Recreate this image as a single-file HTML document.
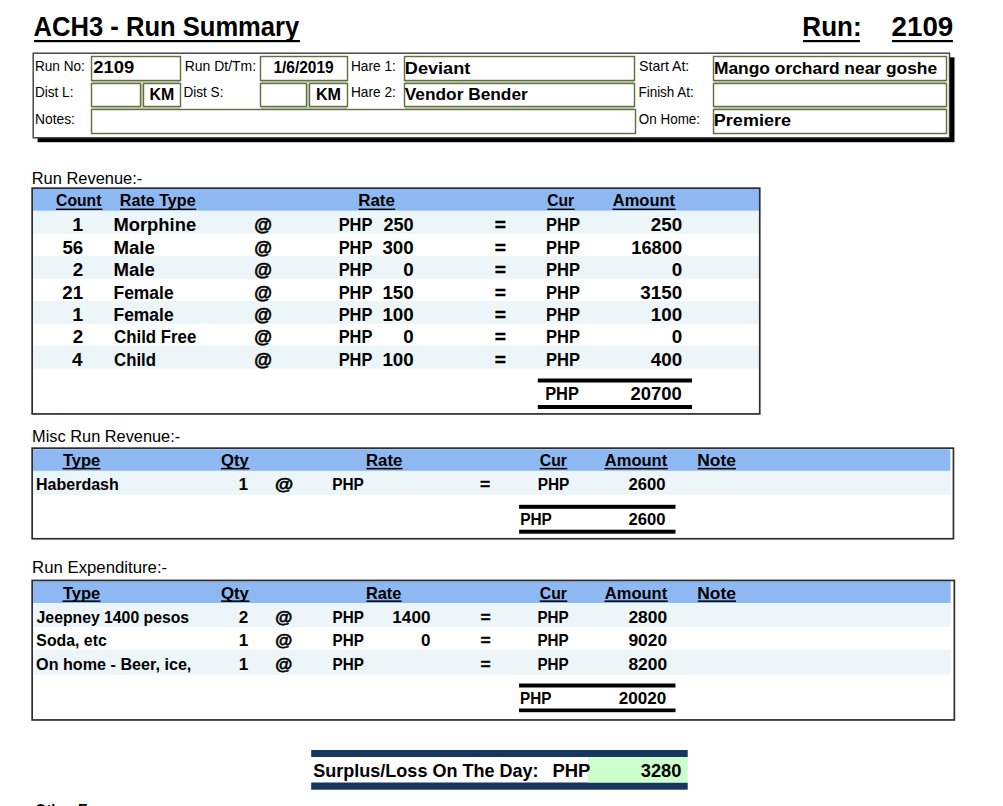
<!DOCTYPE html>
<html><head><meta charset="utf-8"><title>ACH3 - Run Summary</title>
<style>
html,body{margin:0;padding:0;background:#fff;width:1003px;height:806px;overflow:hidden}
svg{display:block;font-family:"Liberation Sans",sans-serif}
text{white-space:pre}
</style></head><body>
<svg width="1003" height="806" viewBox="0 0 1003 806">
<rect x="34.00" y="40.00" width="266.00" height="2.20" fill="#000"/>
<rect x="803.00" y="40.00" width="57.00" height="2.20" fill="#000"/>
<rect x="892.00" y="40.00" width="61.00" height="2.20" fill="#000"/>
<rect x="37.60" y="57.30" width="916.90" height="84.90" fill="#000"/>
<rect x="33.20" y="53.20" width="916.30" height="84.60" fill="#fff" stroke="#3c3c3c" stroke-width="1.40"/>
<rect x="92.00" y="81.00" width="88.00" height="2.00" fill="#c9d0bb"/>
<rect x="92.00" y="107.00" width="88.00" height="2.00" fill="#c9d0bb"/>
<rect x="261.00" y="81.00" width="86.00" height="2.00" fill="#c9d0bb"/>
<rect x="261.00" y="107.00" width="86.00" height="2.00" fill="#c9d0bb"/>
<rect x="405.00" y="81.00" width="229.00" height="2.00" fill="#c9d0bb"/>
<rect x="405.00" y="107.00" width="229.00" height="2.00" fill="#c9d0bb"/>
<rect x="714.00" y="81.00" width="232.00" height="2.00" fill="#c9d0bb"/>
<rect x="714.00" y="107.00" width="232.00" height="2.00" fill="#c9d0bb"/>
<rect x="141.00" y="84.00" width="2.00" height="22.00" fill="#c9d0bb"/>
<rect x="307.00" y="84.00" width="2.00" height="22.00" fill="#c9d0bb"/>
<rect x="91.5" y="56.5" width="89.0" height="24.0" fill="none" stroke="#617242" stroke-width="1.45"/>
<rect x="91.5" y="83.5" width="49.0" height="23.0" fill="none" stroke="#617242" stroke-width="1.45"/>
<rect x="143.5" y="83.5" width="37.0" height="23.0" fill="none" stroke="#617242" stroke-width="1.45"/>
<rect x="91.5" y="109.5" width="544.0" height="24.0" fill="none" stroke="#617242" stroke-width="1.45"/>
<rect x="260.5" y="56.5" width="87.0" height="24.0" fill="none" stroke="#617242" stroke-width="1.45"/>
<rect x="260.5" y="83.5" width="46.0" height="23.0" fill="none" stroke="#617242" stroke-width="1.45"/>
<rect x="309.5" y="83.5" width="38.0" height="23.0" fill="none" stroke="#617242" stroke-width="1.45"/>
<rect x="404.5" y="56.5" width="230.0" height="24.0" fill="none" stroke="#617242" stroke-width="1.45"/>
<rect x="404.5" y="83.5" width="230.0" height="23.0" fill="none" stroke="#617242" stroke-width="1.45"/>
<rect x="713.5" y="56.5" width="233.0" height="24.0" fill="none" stroke="#617242" stroke-width="1.45"/>
<rect x="713.5" y="83.5" width="233.0" height="23.0" fill="none" stroke="#617242" stroke-width="1.45"/>
<rect x="713.5" y="109.5" width="233.0" height="24.0" fill="none" stroke="#617242" stroke-width="1.45"/>
<rect x="33.00" y="189.00" width="726.00" height="21.80" fill="#8db8f2"/>
<rect x="33.00" y="210.80" width="726.00" height="22.70" fill="#ecf5f8"/>
<rect x="33.00" y="256.00" width="726.00" height="22.70" fill="#ecf5f8"/>
<rect x="33.00" y="301.00" width="726.00" height="22.60" fill="#ecf5f8"/>
<rect x="33.00" y="346.00" width="726.00" height="22.50" fill="#ecf5f8"/>
<rect x="32.15" y="188.15" width="727.60" height="225.80" fill="none" stroke="#2e2e2e" stroke-width="1.70"/>
<rect x="537.80" y="378.50" width="154.20" height="4.00" fill="#000"/>
<rect x="537.80" y="405.00" width="154.20" height="4.00" fill="#000"/>
<rect x="56.00" y="208.60" width="46.30" height="1.40" fill="#000"/>
<rect x="120.00" y="208.60" width="76.20" height="1.40" fill="#000"/>
<rect x="358.70" y="208.60" width="36.50" height="1.40" fill="#000"/>
<rect x="547.30" y="208.60" width="27.40" height="1.40" fill="#000"/>
<rect x="612.50" y="208.60" width="63.20" height="1.40" fill="#000"/>
<rect x="33.00" y="449.20" width="917.30" height="21.70" fill="#8db8f2"/>
<rect x="33.00" y="470.90" width="917.30" height="23.90" fill="#ecf5f8"/>
<rect x="32.15" y="448.15" width="921.30" height="90.60" fill="none" stroke="#2e2e2e" stroke-width="1.70"/>
<rect x="62.50" y="467.90" width="37.90" height="1.50" fill="#000"/>
<rect x="221.00" y="467.90" width="28.50" height="1.50" fill="#000"/>
<rect x="366.50" y="467.90" width="36.00" height="1.50" fill="#000"/>
<rect x="539.80" y="467.90" width="27.50" height="1.50" fill="#000"/>
<rect x="604.50" y="467.90" width="63.30" height="1.50" fill="#000"/>
<rect x="697.80" y="467.90" width="38.20" height="1.50" fill="#000"/>
<rect x="519.10" y="504.80" width="156.40" height="4.00" fill="#000"/>
<rect x="519.10" y="529.70" width="156.40" height="4.00" fill="#000"/>
<rect x="33.00" y="581.30" width="917.60" height="21.80" fill="#8db8f2"/>
<rect x="33.00" y="603.10" width="917.60" height="24.00" fill="#ecf5f8"/>
<rect x="33.00" y="649.90" width="917.60" height="24.80" fill="#ecf5f8"/>
<rect x="32.15" y="580.45" width="922.20" height="139.50" fill="none" stroke="#2e2e2e" stroke-width="1.70"/>
<rect x="62.50" y="600.40" width="37.90" height="1.50" fill="#000"/>
<rect x="221.00" y="600.40" width="28.50" height="1.50" fill="#000"/>
<rect x="366.50" y="600.40" width="35.10" height="1.50" fill="#000"/>
<rect x="539.80" y="600.40" width="27.50" height="1.50" fill="#000"/>
<rect x="604.50" y="600.40" width="63.30" height="1.50" fill="#000"/>
<rect x="697.80" y="600.40" width="38.20" height="1.50" fill="#000"/>
<rect x="519.00" y="683.50" width="156.50" height="4.00" fill="#000"/>
<rect x="519.00" y="708.50" width="156.50" height="3.70" fill="#000"/>
<rect x="311.20" y="750.00" width="376.50" height="7.00" fill="#17375e"/>
<rect x="311.20" y="782.50" width="376.50" height="7.20" fill="#17375e"/>
<rect x="588.00" y="757.00" width="99.70" height="25.50" fill="#ccffcc"/>
<text transform="translate(33.60 36.00) scale(0.9359 1)" font-size="27.33" font-weight="bold" fill="#000">ACH3 - Run Summary</text>
<text transform="translate(802.37 36.00) scale(0.9529 1)" font-size="27.33" font-weight="bold" fill="#000">Run:</text>
<text transform="translate(891.53 36.00) scale(1.0160 1)" font-size="27.33" font-weight="bold" fill="#000">2109</text>
<text transform="translate(34.94 71.00) scale(0.9849 1)" font-size="13.81" fill="#000">Run No:</text>
<text transform="translate(34.94 97.20) scale(0.9835 1)" font-size="13.81" fill="#000">Dist L:</text>
<text transform="translate(34.92 123.50) scale(1.0032 1)" font-size="13.81" fill="#000">Notes:</text>
<text transform="translate(184.71 71.00) scale(1.0123 1)" font-size="13.81" fill="#000">Run Dt/Tm:</text>
<text transform="translate(183.44 97.20) scale(0.9834 1)" font-size="13.81" fill="#000">Dist S:</text>
<text transform="translate(350.93 71.00) scale(0.9917 1)" font-size="13.81" fill="#000">Hare 1:</text>
<text transform="translate(350.93 97.20) scale(0.9917 1)" font-size="13.81" fill="#000">Hare 2:</text>
<text transform="translate(639.06 71.00) scale(1.0228 1)" font-size="13.81" fill="#000">Start At:</text>
<text transform="translate(638.45 97.20) scale(0.9742 1)" font-size="13.81" fill="#000">Finish At:</text>
<text transform="translate(638.87 123.50) scale(0.9716 1)" font-size="13.81" fill="#000">On Home:</text>
<text transform="translate(93.22 73.40) scale(1.1508 1)" font-size="15.99" font-weight="bold" fill="#000">2109</text>
<text transform="translate(149.61 99.80) scale(0.9940 1)" font-size="15.99" font-weight="bold" fill="#000">KM</text>
<text transform="translate(273.43 73.40) scale(0.9681 1)" font-size="15.99" font-weight="bold" fill="#000">1/6/2019</text>
<text transform="translate(315.99 99.80) scale(1.0070 1)" font-size="15.99" font-weight="bold" fill="#000">KM</text>
<text transform="translate(404.87 73.50) scale(1.1327 1)" font-size="15.99" font-weight="bold" fill="#000">Deviant</text>
<text transform="translate(404.80 99.60) scale(1.0820 1)" font-size="15.99" font-weight="bold" fill="#000">Vendor Bender</text>
<text transform="translate(713.91 73.50) scale(1.0882 1)" font-size="15.99" font-weight="bold" fill="#000">Mango orchard near goshe</text>
<text transform="translate(713.87 126.30) scale(1.1261 1)" font-size="15.99" font-weight="bold" fill="#000">Premiere</text>
<text transform="translate(31.72 183.50) scale(1.0473 1)" font-size="15.70" fill="#000">Run Revenue:-</text>
<text transform="translate(32.12 442.00) scale(1.0426 1)" font-size="15.70" fill="#000">Misc Run Revenue:-</text>
<text transform="translate(32.09 573.30) scale(1.0679 1)" font-size="15.70" fill="#000">Run Expenditure:-</text>
<text transform="translate(56.11 205.90) scale(0.9804 1)" font-size="15.99" font-weight="bold" fill="#000">Count</text>
<text transform="translate(119.79 205.90) scale(1.0091 1)" font-size="15.99" font-weight="bold" fill="#000">Rate Type</text>
<text transform="translate(358.14 205.90) scale(1.0614 1)" font-size="15.99" font-weight="bold" fill="#000">Rate</text>
<text transform="translate(547.31 205.90) scale(0.9773 1)" font-size="15.99" font-weight="bold" fill="#000">Cur</text>
<text transform="translate(612.74 205.90) scale(1.0323 1)" font-size="15.99" font-weight="bold" fill="#000">Amount</text>
<text transform="translate(63.00 466.20) scale(1.0299 1)" font-size="15.99" font-weight="bold" fill="#000">Type</text>
<text transform="translate(220.98 466.20) scale(1.0436 1)" font-size="15.99" font-weight="bold" fill="#000">Qty</text>
<text transform="translate(365.95 466.20) scale(1.0494 1)" font-size="15.99" font-weight="bold" fill="#000">Rate</text>
<text transform="translate(539.81 466.20) scale(0.9848 1)" font-size="15.99" font-weight="bold" fill="#000">Cur</text>
<text transform="translate(604.74 466.20) scale(1.0357 1)" font-size="15.99" font-weight="bold" fill="#000">Amount</text>
<text transform="translate(697.21 466.20) scale(1.0870 1)" font-size="15.99" font-weight="bold" fill="#000">Note</text>
<text transform="translate(62.90 598.90) scale(1.0327 1)" font-size="15.99" font-weight="bold" fill="#000">Type</text>
<text transform="translate(220.98 598.90) scale(1.0474 1)" font-size="15.99" font-weight="bold" fill="#000">Qty</text>
<text transform="translate(365.98 598.90) scale(1.0223 1)" font-size="15.99" font-weight="bold" fill="#000">Rate</text>
<text transform="translate(539.81 598.90) scale(0.9848 1)" font-size="15.99" font-weight="bold" fill="#000">Cur</text>
<text transform="translate(604.74 598.90) scale(1.0357 1)" font-size="15.99" font-weight="bold" fill="#000">Amount</text>
<text transform="translate(697.21 598.90) scale(1.0870 1)" font-size="15.99" font-weight="bold" fill="#000">Note</text>
<text transform="translate(72.27 231.00) scale(1.1068 1)" font-size="17.73" font-weight="bold" fill="#000">1</text>
<text transform="translate(113.45 231.00) scale(1.0366 1)" font-size="17.73" font-weight="bold" fill="#000">Morphine</text>
<text transform="translate(254.15 231.00) scale(1.0247 1)" font-size="17.73" font-weight="bold" fill="#000" stroke="#000" stroke-width="0.55">@</text>
<text transform="translate(338.67 231.00) scale(0.9259 1)" font-size="17.73" font-weight="bold" fill="#000">PHP</text>
<text transform="translate(383.43 231.00) scale(1.0243 1)" font-size="17.73" font-weight="bold" fill="#000">250</text>
<text transform="translate(494.80 231.00) scale(1.0828 1)" font-size="17.73" font-weight="bold" fill="#000" stroke="#000" stroke-width="0.35">=</text>
<text transform="translate(545.97 231.00) scale(0.9316 1)" font-size="17.73" font-weight="bold" fill="#000">PHP</text>
<text transform="translate(650.79 231.00) scale(1.0605 1)" font-size="17.73" font-weight="bold" fill="#000">250</text>
<text transform="translate(62.41 254.00) scale(1.0523 1)" font-size="17.73" font-weight="bold" fill="#000">56</text>
<text transform="translate(113.44 254.00) scale(1.0509 1)" font-size="17.73" font-weight="bold" fill="#000">Male</text>
<text transform="translate(254.15 254.00) scale(1.0247 1)" font-size="17.73" font-weight="bold" fill="#000" stroke="#000" stroke-width="0.55">@</text>
<text transform="translate(338.67 254.00) scale(0.9259 1)" font-size="17.73" font-weight="bold" fill="#000">PHP</text>
<text transform="translate(382.39 254.00) scale(1.0605 1)" font-size="17.73" font-weight="bold" fill="#000">300</text>
<text transform="translate(494.80 254.00) scale(1.0828 1)" font-size="17.73" font-weight="bold" fill="#000" stroke="#000" stroke-width="0.35">=</text>
<text transform="translate(545.97 254.00) scale(0.9316 1)" font-size="17.73" font-weight="bold" fill="#000">PHP</text>
<text transform="translate(631.26 254.00) scale(1.0319 1)" font-size="17.73" font-weight="bold" fill="#000">16800</text>
<text transform="translate(72.71 276.00) scale(1.0605 1)" font-size="17.73" font-weight="bold" fill="#000">2</text>
<text transform="translate(113.44 276.00) scale(1.0509 1)" font-size="17.73" font-weight="bold" fill="#000">Male</text>
<text transform="translate(254.15 276.00) scale(1.0247 1)" font-size="17.73" font-weight="bold" fill="#000" stroke="#000" stroke-width="0.55">@</text>
<text transform="translate(338.67 276.00) scale(0.9259 1)" font-size="17.73" font-weight="bold" fill="#000">PHP</text>
<text transform="translate(403.30 276.00) scale(1.0605 1)" font-size="17.73" font-weight="bold" fill="#000">0</text>
<text transform="translate(494.80 276.00) scale(1.0828 1)" font-size="17.73" font-weight="bold" fill="#000" stroke="#000" stroke-width="0.35">=</text>
<text transform="translate(545.97 276.00) scale(0.9316 1)" font-size="17.73" font-weight="bold" fill="#000">PHP</text>
<text transform="translate(671.70 276.00) scale(1.0605 1)" font-size="17.73" font-weight="bold" fill="#000">0</text>
<text transform="translate(62.25 298.60) scale(1.0605 1)" font-size="17.73" font-weight="bold" fill="#000">21</text>
<text transform="translate(113.51 298.60) scale(0.9839 1)" font-size="17.73" font-weight="bold" fill="#000">Female</text>
<text transform="translate(254.15 298.60) scale(1.0247 1)" font-size="17.73" font-weight="bold" fill="#000" stroke="#000" stroke-width="0.55">@</text>
<text transform="translate(338.67 298.60) scale(0.9259 1)" font-size="17.73" font-weight="bold" fill="#000">PHP</text>
<text transform="translate(382.39 298.60) scale(1.0605 1)" font-size="17.73" font-weight="bold" fill="#000">150</text>
<text transform="translate(494.80 298.60) scale(1.0828 1)" font-size="17.73" font-weight="bold" fill="#000" stroke="#000" stroke-width="0.35">=</text>
<text transform="translate(545.97 298.60) scale(0.9316 1)" font-size="17.73" font-weight="bold" fill="#000">PHP</text>
<text transform="translate(640.33 298.60) scale(1.0605 1)" font-size="17.73" font-weight="bold" fill="#000">3150</text>
<text transform="translate(72.27 321.00) scale(1.1068 1)" font-size="17.73" font-weight="bold" fill="#000">1</text>
<text transform="translate(113.51 321.00) scale(0.9839 1)" font-size="17.73" font-weight="bold" fill="#000">Female</text>
<text transform="translate(254.15 321.00) scale(1.0247 1)" font-size="17.73" font-weight="bold" fill="#000" stroke="#000" stroke-width="0.55">@</text>
<text transform="translate(338.67 321.00) scale(0.9259 1)" font-size="17.73" font-weight="bold" fill="#000">PHP</text>
<text transform="translate(382.39 321.00) scale(1.0605 1)" font-size="17.73" font-weight="bold" fill="#000">100</text>
<text transform="translate(494.80 321.00) scale(1.0828 1)" font-size="17.73" font-weight="bold" fill="#000" stroke="#000" stroke-width="0.35">=</text>
<text transform="translate(545.97 321.00) scale(0.9316 1)" font-size="17.73" font-weight="bold" fill="#000">PHP</text>
<text transform="translate(650.79 321.00) scale(1.0605 1)" font-size="17.73" font-weight="bold" fill="#000">100</text>
<text transform="translate(72.71 343.30) scale(1.0605 1)" font-size="17.73" font-weight="bold" fill="#000">2</text>
<text transform="translate(114.07 343.30) scale(0.9485 1)" font-size="17.73" font-weight="bold" fill="#000">Child Free</text>
<text transform="translate(254.15 343.30) scale(1.0247 1)" font-size="17.73" font-weight="bold" fill="#000" stroke="#000" stroke-width="0.55">@</text>
<text transform="translate(338.67 343.30) scale(0.9259 1)" font-size="17.73" font-weight="bold" fill="#000">PHP</text>
<text transform="translate(403.30 343.30) scale(1.0605 1)" font-size="17.73" font-weight="bold" fill="#000">0</text>
<text transform="translate(494.80 343.30) scale(1.0828 1)" font-size="17.73" font-weight="bold" fill="#000" stroke="#000" stroke-width="0.35">=</text>
<text transform="translate(545.97 343.30) scale(0.9316 1)" font-size="17.73" font-weight="bold" fill="#000">PHP</text>
<text transform="translate(671.70 343.30) scale(1.0605 1)" font-size="17.73" font-weight="bold" fill="#000">0</text>
<text transform="translate(72.12 365.60) scale(1.0605 1)" font-size="17.73" font-weight="bold" fill="#000">4</text>
<text transform="translate(114.07 365.60) scale(0.9476 1)" font-size="17.73" font-weight="bold" fill="#000">Child</text>
<text transform="translate(254.15 365.60) scale(1.0247 1)" font-size="17.73" font-weight="bold" fill="#000" stroke="#000" stroke-width="0.55">@</text>
<text transform="translate(338.67 365.60) scale(0.9259 1)" font-size="17.73" font-weight="bold" fill="#000">PHP</text>
<text transform="translate(382.39 365.60) scale(1.0605 1)" font-size="17.73" font-weight="bold" fill="#000">100</text>
<text transform="translate(494.80 365.60) scale(1.0828 1)" font-size="17.73" font-weight="bold" fill="#000" stroke="#000" stroke-width="0.35">=</text>
<text transform="translate(545.97 365.60) scale(0.9316 1)" font-size="17.73" font-weight="bold" fill="#000">PHP</text>
<text transform="translate(650.79 365.60) scale(1.0605 1)" font-size="17.73" font-weight="bold" fill="#000">400</text>
<text transform="translate(545.17 400.00) scale(0.9259 1)" font-size="17.73" font-weight="bold" fill="#000">PHP</text>
<text transform="translate(630.42 400.00) scale(1.0409 1)" font-size="17.73" font-weight="bold" fill="#000">20700</text>
<text transform="translate(36.00 490.10) scale(1.0017 1)" font-size="15.99" font-weight="bold" fill="#000">Haberdash</text>
<text transform="translate(238.42 490.10) scale(1.0691 1)" font-size="15.99" font-weight="bold" fill="#000">1</text>
<text transform="translate(274.93 490.10) scale(1.1651 1)" font-size="15.99" font-weight="bold" fill="#000" stroke="#000" stroke-width="0.55">@</text>
<text transform="translate(332.24 490.10) scale(0.9633 1)" font-size="15.99" font-weight="bold" fill="#000">PHP</text>
<text transform="translate(480.05 490.10) scale(1.0917 1)" font-size="15.99" font-weight="bold" fill="#000" stroke="#000" stroke-width="0.35">=</text>
<text transform="translate(537.74 490.10) scale(0.9633 1)" font-size="15.99" font-weight="bold" fill="#000">PHP</text>
<text transform="translate(628.38 490.10) scale(1.0430 1)" font-size="15.99" font-weight="bold" fill="#000">2600</text>
<text transform="translate(520.14 524.70) scale(0.9633 1)" font-size="15.99" font-weight="bold" fill="#000">PHP</text>
<text transform="translate(628.38 524.70) scale(1.0430 1)" font-size="15.99" font-weight="bold" fill="#000">2600</text>
<text transform="translate(36.60 622.50) scale(0.9863 1)" font-size="15.99" font-weight="bold" fill="#000">Jeepney 1400 pesos</text>
<text transform="translate(238.82 622.50) scale(1.0691 1)" font-size="15.99" font-weight="bold" fill="#000">2</text>
<text transform="translate(275.28 622.50) scale(1.0937 1)" font-size="15.99" font-weight="bold" fill="#000" stroke="#000" stroke-width="0.55">@</text>
<text transform="translate(332.55 622.50) scale(0.9506 1)" font-size="15.99" font-weight="bold" fill="#000">PHP</text>
<text transform="translate(392.37 622.50) scale(1.0691 1)" font-size="15.99" font-weight="bold" fill="#000">1400</text>
<text transform="translate(480.45 622.50) scale(1.0917 1)" font-size="15.99" font-weight="bold" fill="#000" stroke="#000" stroke-width="0.35">=</text>
<text transform="translate(537.45 622.50) scale(0.9506 1)" font-size="15.99" font-weight="bold" fill="#000">PHP</text>
<text transform="translate(628.46 622.50) scale(1.0866 1)" font-size="15.99" font-weight="bold" fill="#000">2800</text>
<text transform="translate(36.35 646.35) scale(0.9910 1)" font-size="15.99" font-weight="bold" fill="#000">Soda, etc</text>
<text transform="translate(238.82 646.35) scale(1.0691 1)" font-size="15.99" font-weight="bold" fill="#000">1</text>
<text transform="translate(275.28 646.35) scale(1.0937 1)" font-size="15.99" font-weight="bold" fill="#000" stroke="#000" stroke-width="0.55">@</text>
<text transform="translate(332.55 646.35) scale(0.9506 1)" font-size="15.99" font-weight="bold" fill="#000">PHP</text>
<text transform="translate(420.89 646.35) scale(1.0691 1)" font-size="15.99" font-weight="bold" fill="#000">0</text>
<text transform="translate(480.45 646.35) scale(1.0917 1)" font-size="15.99" font-weight="bold" fill="#000" stroke="#000" stroke-width="0.35">=</text>
<text transform="translate(537.45 646.35) scale(0.9506 1)" font-size="15.99" font-weight="bold" fill="#000">PHP</text>
<text transform="translate(628.46 646.35) scale(1.0866 1)" font-size="15.99" font-weight="bold" fill="#000">9020</text>
<text transform="translate(36.10 670.20) scale(1.0107 1)" font-size="15.99" font-weight="bold" fill="#000">On home - Beer, ice,</text>
<text transform="translate(238.82 670.20) scale(1.0691 1)" font-size="15.99" font-weight="bold" fill="#000">1</text>
<text transform="translate(275.28 670.20) scale(1.0937 1)" font-size="15.99" font-weight="bold" fill="#000" stroke="#000" stroke-width="0.55">@</text>
<text transform="translate(332.55 670.20) scale(0.9506 1)" font-size="15.99" font-weight="bold" fill="#000">PHP</text>
<text transform="translate(480.45 670.20) scale(1.0917 1)" font-size="15.99" font-weight="bold" fill="#000" stroke="#000" stroke-width="0.35">=</text>
<text transform="translate(537.45 670.20) scale(0.9506 1)" font-size="15.99" font-weight="bold" fill="#000">PHP</text>
<text transform="translate(628.46 670.20) scale(1.0866 1)" font-size="15.99" font-weight="bold" fill="#000">8200</text>
<text transform="translate(520.05 704.30) scale(0.9538 1)" font-size="15.99" font-weight="bold" fill="#000">PHP</text>
<text transform="translate(618.67 704.30) scale(1.0690 1)" font-size="15.99" font-weight="bold" fill="#000">20020</text>
<text transform="translate(313.32 776.80) scale(0.9694 1)" font-size="18.60" font-weight="bold" fill="#000">Surplus/Loss On The Day:</text>
<text transform="translate(552.45 777.00) scale(0.9918 1)" font-size="18.60" font-weight="bold" fill="#000">PHP</text>
<text transform="translate(640.71 777.00) scale(0.9841 1)" font-size="18.60" font-weight="bold" fill="#000">3280</text>
<text transform="translate(35.04 816.00) scale(0.9300 1)" font-size="15.70" font-weight="bold" fill="#000">Other Expenses:-</text>
</svg>
</body></html>
